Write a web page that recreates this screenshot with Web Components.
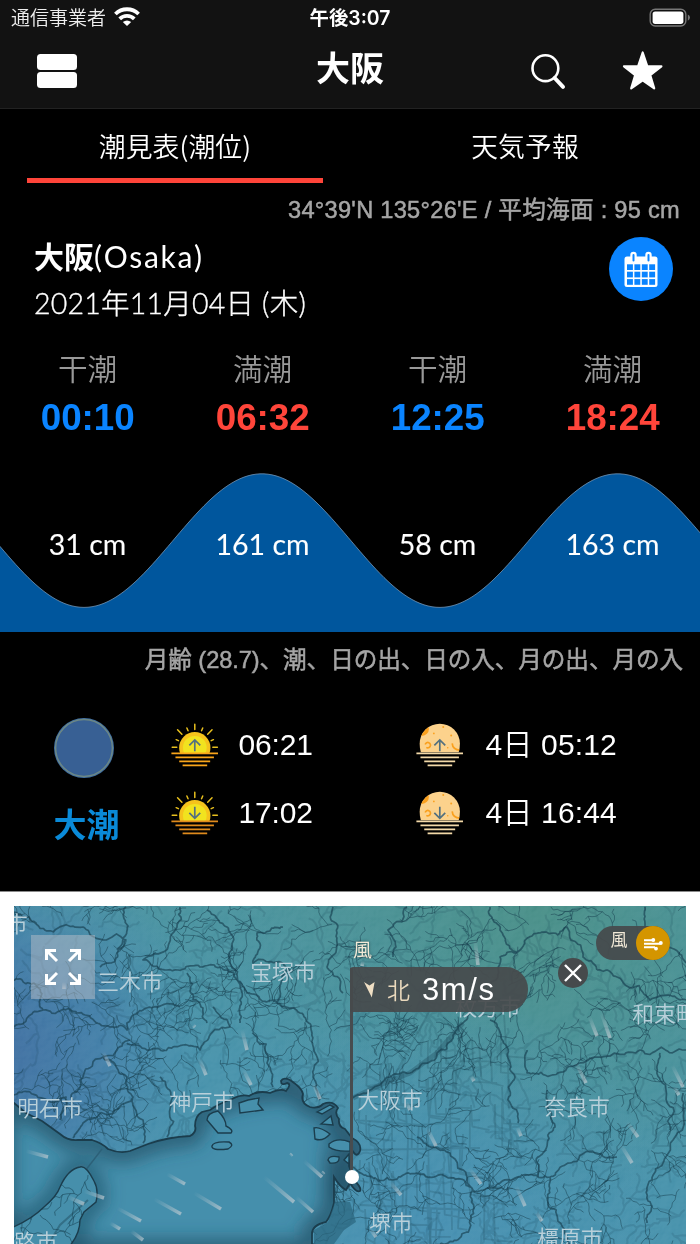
<!DOCTYPE html>
<html lang="ja">
<head>
<meta charset="utf-8">
<title>大阪</title>
<style>
   html, body {
      margin: 0;
      width: 700px;
      height: 1244px;
      overflow: hidden;
      background: #000;
   }

   body {
      font-family: "Liberation Sans", "Noto Sans CJK JP", sans-serif;
      color: #fff;
   }
</style>
</head>
<body>

<tide-app>
   <status-bar slot="top" carrier="通信事業者">午後3:07</status-bar>
   <nav-bar slot="top">大阪</nav-bar>

   <tab-row>
      <tab-item active>潮見表(潮位)</tab-item>
      <tab-item>天気予報</tab-item>
   </tab-row>

   <section-note style="--right: 20px; --size: 23.6px; --track: 0.28px; --h: 54px">34°39'N 135°26'E / 平均海面 : 95 cm</section-note>

   <place-header>
      <b slot="name">大阪</b><span slot="name">(Osaka)</span>
      <span slot="date">2021年11月04日 (木)</span>
   </place-header>

   <tide-times>
      <tide-time time="00:10">干潮</tide-time>
      <tide-time time="06:32" high>満潮</tide-time>
      <tide-time time="12:25">干潮</tide-time>
      <tide-time time="18:24" high>満潮</tide-time>
   </tide-times>

   <tide-wave>
      <span>31 cm</span>
      <span>161 cm</span>
      <span>58 cm</span>
      <span>163 cm</span>
   </tide-wave>

   <section-note style="--right: 17px; --size: 23.6px; --track: -0.07px; --h: 56px">月齢 (28.7)、潮、日の出、日の入、月の出、月の入</section-note>

   <sky-panel>
      <moon-phase slot="moon">大潮</moon-phase>
      <rise-set slot="sun" kind="sun" dir="up">06:21</rise-set>
      <rise-set slot="sun" kind="sun" dir="down">17:02</rise-set>
      <rise-set slot="moons" kind="moon" dir="up">4日 05:12</rise-set>
      <rise-set slot="moons" kind="moon" dir="down">4日 16:44</rise-set>
   </sky-panel>

   <wind-map slot="map">
      <map-label x="-5" y="923">加東市</map-label>
      <map-label x="130" y="981">三木市</map-label>
      <map-label x="283" y="971">宝塚市</map-label>
      <map-label x="50" y="1107">明石市</map-label>
      <map-label x="202" y="1101">神戸市</map-label>
      <map-label x="390" y="1099">大阪市</map-label>
      <map-label x="577" y="1106">奈良市</map-label>
      <map-label x="488" y="1006">枚方市</map-label>
      <map-label x="665" y="1013">和束町</map-label>
      <map-label x="391" y="1222">堺市</map-label>
      <map-label x="570" y="1237">橿原市</map-label>
      <map-label x="25" y="1241">淡路市</map-label>
   </wind-map>
</tide-app>

<script>
// Attach an open shadow root and fill it
function shadow(el, html) {
   const root = el.attachShadow({ mode: "open" });

   root.innerHTML = html;

   return root;
}

// Page frame: bars, dark content, map below
class TideApp extends HTMLElement {
   connectedCallback() {
      shadow(this, `
         <style>
            :host {
               display: flex;
               flex-direction: column;
               width: 700px;
               height: 1244px;
               overflow: hidden;
               background: #fff;
            }

            header { background: #121212; border-bottom: 1px solid #222; }
            main   { background: #000; border-bottom: 1px solid #8a8a8a; height: 782px; }
            footer { padding: 14px 14px 0; }
         </style>
         <header><slot name="top"></slot></header>
         <main><slot></slot></main>
         <footer><slot name="map"></slot></footer>
      `);
   }
}

class StatusBar extends HTMLElement {
   connectedCallback() {
      shadow(this, `
         <style>
            :host {
               display: grid;
               grid-template-columns: 1fr auto 1fr;
               align-items: center;
               height: 36px;
               padding: 0 8px 0 11px;
               box-sizing: border-box;
               font: 350 19px/34px "Noto Sans CJK JP", sans-serif;
            }

            .left { display: flex; align-items: center; gap: 8px; color: #eee; }
            .time { font: 600 19.4px/36px Inter, "Noto Sans CJK JP", sans-serif; margin-right: 3px; }
            .right { justify-self: end; display: flex; }
            .left span { margin-top: -2px; }
            .left svg { margin-top: -3px; }
         </style>
         <div class="left">
            <span>${this.getAttribute("carrier")}</span>
            <svg width="26" height="19" viewBox="0 0 26 19" fill="none" stroke="#fff" stroke-width="3.8">
               <path d="M1.4 7A16.6 16.6 0 0 1 24.6 7"/>
               <path d="M5.7 11.8A10.4 10.4 0 0 1 20.3 11.8"/>
               <path d="M13 19L8.8 15.1Q13 12 17.2 15.1Z" fill="#fff" stroke="none"/>
            </svg>
         </div>
         <div class="time"><slot></slot></div>
         <div class="right">
            <svg width="43" height="20" viewBox="0 0 43 20">
               <rect x="1.2" y="1.2" width="35.6" height="16.8" rx="5" fill="none" stroke="#777" stroke-width="1.4"/>
               <rect x="3.6" y="3.5" width="30.8" height="12.4" rx="2.6" fill="#fff"/>
               <path d="M38.8 6.4Q41 7.4 41 9.4T38.8 12.8Z" fill="#777"/>
            </svg>
         </div>
      `);
   }
}

class NavBar extends HTMLElement {
   connectedCallback() {
      shadow(this, `
         <style>
            :host {
               display: grid;
               grid-template-columns: 1fr auto 1fr;
               height: 72px;
               padding: 0 36px 0 37px;
               box-sizing: border-box;
               font: 700 34px/62px "Noto Sans CJK JP", sans-serif;
            }

            .title { margin-right: 1px; }
            .cards { padding-top: 18px; display: flex; flex-direction: column; gap: 2px; }
            .cards i { width: 39.5px; height: 15.8px; border-radius: 3.5px; background: #fff; }
            .icons { justify-self: end; display: flex; gap: 54px; padding-top: 13px; }
         </style>
         <div class="cards"><i></i><i></i></div>
         <div class="title"><slot></slot></div>
         <div class="icons">
            <svg width="40" height="44" viewBox="0 0 40 44" fill="none" stroke="#fff" stroke-linecap="round">
               <circle cx="17.4" cy="19.2" r="12.9" stroke-width="2.6"/>
               <path d="M26.7 29L35 37.8" stroke-width="4"/>
            </svg>
            <svg width="42" height="44" viewBox="0 0 42 44">
               <path d="M20.7 3.5L25.3 17.3H39.4L28.2 26.1L32.2 39.4L20.7 31.4L9.2 39.4L13.2 26.1L2 17.3H16.1Z" fill="#fff" stroke="#fff" stroke-width="2.2" stroke-linejoin="round"/>
            </svg>
         </div>
      `);
   }
}

class TabRow extends HTMLElement {
   connectedCallback() {
      shadow(this, `
         <style>
            :host {
               display: grid;
               grid-template-columns: 1fr 1fr;
               gap: 54px;
               padding: 0 27px;
               height: 74px;
            }
         </style>
         <slot></slot>
      `);
   }
}

class TabItem extends HTMLElement {
   connectedCallback() {
      shadow(this, `
         <style>
            :host {
               display: block;
               box-sizing: border-box;
               height: 74px;
               text-align: center;
               font: 350 26.8px/74px "Noto Sans CJK JP", sans-serif;
               letter-spacing: 0.1px;
               border-bottom: 5px solid transparent;
            }

            :host([active]) { border-color: #ff453a; }
         </style>
         <slot></slot>
      `);
   }
}

// Grey right-aligned caption
class SectionNote extends HTMLElement {
   connectedCallback() {
      shadow(this, `
         <style>
            :host {
               display: block;
               text-align: right;
               white-space: nowrap;
               height: var(--h);
               padding-right: var(--right);
               font-size: var(--size);
               font-weight: 400;
               line-height: var(--h);
               letter-spacing: var(--track);
               color: #a5a5a5;
               -webkit-text-stroke: 0.5px #a5a5a5;
            }
         </style>
         <slot></slot>
      `);
   }
}

class PlaceHeader extends HTMLElement {
   connectedCallback() {
      shadow(this, `
         <style>
            :host {
               display: flex;
               justify-content: space-between;
               height: 89px;
               padding: 0 27px 0 34px;
               font-family: Lato, "Noto Sans CJK JP", sans-serif;
            }

            .name { font-size: 30px; line-height: 39px; height: 42px; }
            .name ::slotted(span) { letter-spacing: 1.7px; }

            .date {
               font-size: 28.5px;
               line-height: 48px;
               font-weight: 300;
               letter-spacing: 0.22px;
               -webkit-text-stroke: 0.35px #fff;
            }

            svg { display: block; }
         </style>
         <div>
            <div class="name"><slot name="name"></slot></div>
            <div class="date"><slot name="date"></slot></div>
         </div>
         <svg width="64" height="64" viewBox="0 0 64 64">
            <circle cx="32" cy="32" r="32" fill="#0a84ff"/>
            <rect x="15.5" y="19.5" width="33" height="30.5" rx="2.5" fill="#fff"/>
            <g fill="#0a84ff">
               ${[27.3, 34.7, 42.1].map(y => [18, 25.4, 32.8, 40.2].map(x =>
                  `<rect x="${x}" y="${y}" width="5.9" height="5.7"/>`).join("")).join("")}
            </g>
            <rect x="22.4" y="15.9" width="4.2" height="9.6" rx="2.1" fill="#0a84ff" stroke="#fff" stroke-width="2.2"/>
            <rect x="37.4" y="15.9" width="4.2" height="9.6" rx="2.1" fill="#0a84ff" stroke="#fff" stroke-width="2.2"/>
         </svg>
      `);
   }
}

class TideTimes extends HTMLElement {
   connectedCallback() {
      shadow(this, `
         <style>
            :host {
               display: grid;
               grid-template-columns: repeat(4, 1fr);
               height: 96px;
               padding-top: 22px;
            }
         </style>
         <slot></slot>
      `);
   }
}

class TideTime extends HTMLElement {
   connectedCallback() {
      shadow(this, `
         <style>
            :host { display: block; text-align: center; color: #0a84ff; }
            :host([high]) { color: #ff453a; }

            .label { height: 44px; font: 350 29.6px/40px "Noto Sans CJK JP", sans-serif; color: #999; }
            .time  { font-size: 36.8px; line-height: 52px; font-weight: 700; padding-left: 0.5px; }
         </style>
         <div class="label"><slot></slot></div>
         <div class="time">${this.getAttribute("time")}</div>
      `);
   }
}

// Sine wave with the heights laid over it
class TideWave extends HTMLElement {
   connectedCallback() {
      let line = "";

      for (let x = -4; x <= 704; x += 4)
         line += `${line ? "L" : "M"}${x} ${(96.6 + 66.8 * Math.cos(2 * Math.PI * (x - 84) / 355.8)).toFixed(2)}`;

      shadow(this, `
         <style>
            :host { display: grid; height: 188px; }
            svg, .heights { grid-area: 1 / 1; }
            svg { display: block; }

            .heights {
               display: grid;
               grid-template-columns: repeat(4, 1fr);
               padding-top: 80px;
               text-align: center;
               font: 400 28.5px/40px Lato, sans-serif;
               letter-spacing: 0;
               -webkit-text-stroke: 0.1px #fff;
               z-index: 1;
            }
         </style>
         <svg width="700" height="188" viewBox="0 0 700 188">
            <path d="${line}V188H-4Z" fill="#00569d"/>
            <path d="${line}" fill="none" stroke="#7296b6" stroke-width="0.8"/>
         </svg>
         <div class="heights"><slot></slot></div>
      `);
   }
}

class SkyPanel extends HTMLElement {
   connectedCallback() {
      shadow(this, `
         <style>
            :host {
               display: grid;
               grid-template-columns: 137px 245px 1fr;
               padding: 24px 0 0 34px;
               height: 179px;
            }

            .col { display: flex; flex-direction: column; }
         </style>
         <div class="col"><slot name="moon"></slot></div>
         <div class="col"><slot name="sun"></slot></div>
         <div class="col"><slot name="moons"></slot></div>
      `);
   }
}

class MoonPhase extends HTMLElement {
   connectedCallback() {
      shadow(this, `
         <style>
            :host {
               display: flex;
               flex-direction: column;
               align-items: center;
               width: 105px;
               padding-top: 6px;
               font: 700 33px/52px "Noto Sans CJK JP", sans-serif;
               color: #0a8ad8;
            }

            svg { margin: 0 5px 19px 0; }
         </style>
         <svg width="60" height="60" viewBox="0 0 60 60">
            <circle cx="30" cy="30" r="30" fill="#3d6da3"/>
            <circle cx="30" cy="30" r="28.4" fill="#386094" stroke="#6c8784" stroke-width="1.5"/>
         </svg>
         <slot></slot>
      `);
   }
}

// Sun or moon on the horizon with its time
class RiseSet extends HTMLElement {
   connectedCallback() {
      const up = this.getAttribute("dir") == "up";
      const sun = this.getAttribute("kind") == "sun";
      const arrow = up ? "M24 28.5V17M18.5 22.5L24 17L29.5 22.5" : "M24 16V27.5M18.5 22L24 27.5L29.5 22";
      const water = sun ? (up ? "#f9a51a" : "#df8a1c") : "#f3d9a8";

      const disc = sun ? `
         <clipPath id="c"><rect width="48" height="30.5"/></clipPath>
         <g clip-path="url(#c)">
            <circle cx="24" cy="25" r="15.8" fill="#f5c31c"/>
            <circle cx="24" cy="25" r="12" fill="#f1e31f"/>
         </g>
         <path stroke="#e8c01e" stroke-width="1.5" stroke-linecap="round" d="M24 1.2V6.5M16 5L17.2 7.8M32 5L30.8 7.8M6.6 6.8L11 11.4M41.4 6.8L37 11.4M5.2 16.8L7.5 17.8M42.8 16.8L40.5 17.8M1.2 24.5H5.8M46.8 24.5H42.2"/>` : `
         <clipPath id="c"><path d="M3.7 21a20.3 20.3 0 0 1 40.6 0q0 5-1.2 8.5H4.9Q3.7 26 3.7 21Z"/></clipPath>
         <g clip-path="url(#c)" fill="none" stroke="#faa01e" stroke-width="1.7">
            <rect width="48" height="31" fill="#fcd28c" stroke="none"/>
            <circle cx="6" cy="6" r="7" fill="#faa01e" stroke="none"/>
            <path d="M9.3 21.6A2.7 2.7 0 1 1 10.4 24.6"/>
            <path d="M36.5 20.5Q37 27 45 27.5"/>
         </g>
         <g fill="#faa01e"><circle cx="27.5" cy="4" r="1"/><circle cx="18" cy="10.5" r=".9"/><circle cx="35.5" cy="12.7" r="1"/><circle cx="32" cy="25" r=".8"/></g>`;

      shadow(this, `
         <style>
            :host {
               display: flex;
               align-items: center;
               gap: ${sun ? 20 : 22}px;
               height: 68px;
               font-size: 30px;
               font-weight: 350;
               line-height: 66px;
               letter-spacing: ${sun ? -0.2 : 0.15}px;
               white-space: nowrap;
            }

            span { margin-top: -2px; }
         </style>
         <svg width="47.6" height="45.6" viewBox="0 0 48 46" fill="none">
            ${disc}
            <path d="${arrow}" stroke="#53707f" stroke-width="1.7"/>
            <path stroke="${water}" stroke-width="1.7" d="M.4 30.6H47.4M4.5 34.6H43.3M8.3 38.7H39.5M11.7 42.8H36.5"/>
         </svg>
         <span><slot></slot></span>
      `);
   }
}

// Land and water of the wind map, in page coordinates
const COAST = "M14 1103L26 1113L42 1121L60 1134Q68 1141 78 1140L92 1140Q102 1143 108 1149Q120 1154 130 1151L148 1144Q168 1137 190 1136Q197 1132 195 1126Q195 1116 202 1112L210 1110Q220 1103 232 1099Q242 1094 249 1096Q258 1090 270 1093Q281 1088 286 1091Q292 1084 287 1083Q281 1086 281 1081Q283 1077 290 1080Q302 1088 303 1094Q300 1103 310 1107Q318 1109 323 1104Q333 1100 338 1108Q334 1113 339 1119Q338 1127 345 1129L352 1138Q362 1143 360 1151Q357 1159 352 1150L349 1166L354 1180Q362 1188 360 1191Q356 1193 350 1183L346 1190Q340 1187 334 1177L334 1203Q331 1216 326 1222Q312 1225 312 1234L312 1250H4V1103Z";

const ISLANDS = [
   "M4 1231Q30 1221 44 1207Q57 1196 60 1187Q68 1169 80 1167Q86 1165 94 1181Q99 1190 96 1202L84 1212L80 1220Q80 1236 66 1250H4Z",
   "M207 1120Q207 1113 218 1111Q226 1119 226 1126Q234 1130 231 1133L218 1133Z",
   "M212 1146Q213 1141 229 1142Q235 1145 228 1149Q211 1151 212 1146Z",
   "M239 1103L248 1100L259 1098L258 1104L263 1110L240 1113Z",
   "M314 1128Q319 1126 330 1134Q323 1142 315 1139Z",
   "M321 1124L331 1116L333 1125Z",
   "M329 1144Q337 1137 350 1142V1151Q336 1152 329 1147Z",
   "M328 1160Q329 1155 339 1157Q340 1164 330 1163Z",
   "M317 1112L330 1105L334 1107L322 1114Z",
   "M344 1160L349 1154V1164Z",
];

const RIVERS = [
   [14, 912, 36, 923, 83, 927, 126, 940, 110, 963, 100, 967],
   [126, 907, 128, 926, 117, 950],
   [180, 907, 177, 927, 143, 960, 167, 970, 200, 967, 227, 970, 247, 993, 277, 1003, 300, 1013, 312, 1033, 313, 1077, 320, 1100],
   [333, 907, 337, 933, 327, 967, 343, 993],
   [277, 1003, 290, 970, 253, 963, 257, 933, 283, 927],
   [14, 1027, 43, 1010, 34, 983, 14, 980],
   [43, 1010, 77, 1013, 110, 1027, 127, 1030, 143, 1010, 180, 1007],
   [127, 1043, 150, 1050, 173, 1047, 200, 1050, 230, 1027, 213, 1007],
   [72, 1103, 80, 1080, 103, 1057, 130, 1040],
   [103, 1057, 127, 1077, 133, 1097, 83, 1123, 73, 1138],
   [133, 1097, 143, 1120, 143, 1143],
   [207, 910, 227, 927, 230, 963, 240, 1000, 240, 1023],
   [253, 1033, 267, 1063, 273, 1087],
   [160, 1077, 173, 1097, 167, 1137],
   [187, 973, 193, 1000, 207, 1023],
   [597, 970, 583, 957, 567, 927, 540, 933, 517, 953, 500, 957, 498, 977, 463, 1023, 437, 1053, 410, 1073, 380, 1085, 353, 1098],
   [490, 1020, 507, 1047, 515, 1077, 518, 1123],
   [527, 1050, 527, 1073, 563, 1072, 600, 1057, 640, 1050, 686, 1050],
   [547, 1090, 555, 1127, 543, 1153, 537, 1177],
   [353, 1167, 393, 1180, 417, 1173, 450, 1178, 477, 1192, 500, 1183, 523, 1175, 550, 1177, 570, 1163, 617, 1157],
   [417, 1137, 450, 1153, 473, 1190],
   [683, 1093, 673, 1140, 647, 1190, 647, 1223],
   [597, 970, 617, 977, 650, 1000, 686, 1000],
   [645, 907, 645, 923, 663, 947, 686, 963],
   [407, 907, 388, 930, 393, 957],
   [490, 907, 500, 930, 517, 953],
   [660, 1053, 660, 1080, 670, 1130],
   [550, 1177, 548, 1205, 570, 1244],
   [60, 1120, 66, 1097, 30, 1092, 14, 1095],
   [473, 1190, 470, 1220, 440, 1244],
];

// head x, head y, tail dx, tail dy
const GUSTS = [
   [110, 1066, -7, -14], [247, 1050, -5, -20], [206, 1075, -7, -17], [251, 1085, -8, -16], [320, 1099, -7, -16],
   [48, 1157, -22, -6], [185, 1184, -18, -10], [104, 1198, -20, -7], [84, 1204, -16, -7], [181, 1214, -27, -15],
   [141, 1221, -24, -13], [120, 1229, -10, -6], [143, 1240, -12, -9], [221, 1209, -27, -16], [294, 1202, -30, -25],
   [322, 1177, -18, -16], [313, 1212, -17, -15], [478, 965, -3, -25], [597, 1036, -8, -20], [610, 1038, -9, -26],
   [586, 1083, -10, -20], [683, 1087, -11, -22], [679, 1095, -5, -8], [436, 1146, -9, -18], [410, 1110, -4, -8],
   [481, 1184, -12, -16], [401, 1195, -11, -13], [525, 1206, -9, -20], [542, 1221, -6, -9], [632, 1163, -11, -18],
   [638, 1137, -11, -15], [521, 1136, -4, -9], [474, 1081, -3, -5], [376, 1237, -6, -8], [195, 1027, -2, -2],
   [292, 1154, -2, 2], [324, 1172, -2, 2], [64, 989, 0, -7], [362, 966, 1, -5],
];

// Small seeded generator, so the streams are the same on each load
let seed = 77;
const rnd = () => (seed = (seed * 16807) % 2147483647) / 2147483647;

// Break a straight segment into a winding one
function wind(x1, y1, x2, y2, n) {
   const len = Math.hypot(x2 - x1, y2 - y1);

   if (n == 0 || len < 3)
      return `L${x2.toFixed(1)} ${y2.toFixed(1)}`;

   const mx = (x1 + x2) / 2 + (rnd() - 0.5) * len * 0.38;
   const my = (y1 + y2) / 2 + (rnd() - 0.5) * len * 0.38;

   return wind(x1, y1, mx, my, n - 1) + wind(mx, my, x2, y2, n - 1);
}

// Random walk with side branches
function stream(x, y, angle, steps, depth) {
   let d = `M${x.toFixed(1)} ${y.toFixed(1)}`;
   let more = "";
   let bend = (rnd() - 0.5) * 0.2;

   for (let i = 0; i < steps; i++) {
      const a = angle + (rnd() - 0.5) * 1.3;

      angle += bend;
      x += Math.cos(a) * 4;
      y += Math.sin(a) * 4;
      d += `L${x.toFixed(1)} ${y.toFixed(1)}`;

      if (depth > 0 && rnd() < 0.2)
         more += stream(x, y, angle + (rnd() < 0.5 ? -1 : 1) * (0.6 + rnd() * 0.5), 2 + steps * 0.45 * rnd(), depth - 1);
   }

   return d + more;
}

class WindMap extends HTMLElement {
   connectedCallback() {
      const rivers = RIVERS.map(p => {
         let d = `M${p[0]} ${p[1]}`;

         for (let i = 2; i < p.length; i += 2)
            d += wind(p[i - 2], p[i - 1], p[i], p[i + 1], 4);

         return d;
      }).join("");

      let streams = "";
      let faint = "";

      for (let y = 908; y < 1250; y += 36)
         for (let x = 18; x < 690; x += 36) {
            streams += stream(x + rnd() * 30, y + rnd() * 30, rnd() * 6.28, 9 + rnd() * 9, 2);
            faint += stream(x + rnd() * 30, y + rnd() * 30, rnd() * 6.28, 14, 1);
         }

      // City streets
      let roads = "";

      for (let i = 0; i < 60; i++) {
         const x = 356 + rnd() * 155;
         const y = 1015 + rnd() * 215;

         roads += `M${x | 0} ${y | 0}l${rnd() * 5 - 2} ${20 + rnd() * 32}l${8 + rnd() * 26} ${rnd() * 5}`;
      }

      roads += "M374 1244L392 1150L392 1080L430 1010M405 1244L408 1140L402 1060M430 1244L428 1130L436 1050M452 1230L450 1100L470 1040M356 1120L420 1125L480 1120M356 1150L480 1148M360 1205L470 1210";

      const gusts = GUSTS.map(([x, y, dx, dy], i) => `
         <linearGradient id="g${i}" gradientUnits="userSpaceOnUse" x1="${x + dx}" y1="${y + dy}" x2="${x}" y2="${y}">
            <stop offset="0" stop-color="#b9c6cd" stop-opacity="0"/><stop offset="1" stop-color="#c3ccd2" stop-opacity=".68"/>
         </linearGradient>
         <path d="M${x + dx} ${y + dy}L${x} ${y}" stroke="url(#g${i})" stroke-width="3.6"/>`).join("");

      shadow(this, `
         <style>
            :host {
               display: block;
               position: relative;
               width: 672px;
               height: 338px;
               overflow: hidden;
               background: #458fac;
            }

            svg { display: block; }

            .full, .hud, .close, .toggle, .name, .pin { position: absolute; }

            .full {
               left: 17px;
               top: 29px;
               width: 64px;
               height: 64px;
               background: #b7bec880;
            }

            .pin { left: 336px; top: 62px; width: 3px; height: 204px; background: #474c4f; }
            .pin::after {
               content: "";
               position: absolute;
               left: -5px;
               top: 202px;
               width: 14px;
               height: 14px;
               border-radius: 50%;
               background: #fff;
            }

            .name { left: 339px; top: 29px; font: 400 19px/28px "Noto Sans CJK JP", sans-serif; color: #f2ead8; text-shadow: 0 0 3px #0008; }

            .hud {
               left: 336px;
               top: 61px;
               display: flex;
               align-items: center;
               width: 178px;
               height: 45px;
               box-sizing: border-box;
               padding-left: 14px;
               border-radius: 3px 22px 22px 0;
               background: #464a4ceb;
               font-size: 31px;
               line-height: 45px;
            }

            .hud b { margin: 0 12px 0 11px; font: 350 23px/45px "Noto Sans CJK JP", sans-serif; color: #ead9bd; }
            .hud span { letter-spacing: 1.6px; }

            .close { left: 544px; top: 52px; }

            .toggle {
               left: 582px;
               top: 20px;
               display: flex;
               justify-content: space-between;
               width: 73.5px;
               height: 34px;
               border-radius: 17px;
               background: #464a4cf0;
               font: 400 17px/26px "Noto Sans CJK JP", sans-serif;
               color: #f2ead8;
            }

            .toggle span { padding-left: 14.5px; }
         </style>

         <svg width="672" height="338" viewBox="14 906 672 338">
            <defs>
               <linearGradient id="base" x1="0" y1="1" x2=".5" y2="0">
                  <stop offset="0" stop-color="#4590ae"/>
                  <stop offset=".55" stop-color="#4590a9"/>
                  <stop offset="1" stop-color="#489199"/>
               </linearGradient>
               <radialGradient id="west" gradientUnits="userSpaceOnUse" cx="0" cy="1050" r="210">
                  <stop offset="0" stop-color="#3e6c9f"/>
                  <stop offset=".5" stop-color="#4079a6" stop-opacity=".8"/>
                  <stop offset="1" stop-color="#4389ab" stop-opacity="0"/>
               </radialGradient>
               <radialGradient id="east" gradientUnits="userSpaceOnUse" cx="540" cy="900" r="310">
                  <stop offset="0" stop-color="#478d85"/>
                  <stop offset="1" stop-color="#478d90" stop-opacity="0"/>
               </radialGradient>
               <radialGradient id="south" gradientUnits="userSpaceOnUse" cx="430" cy="1230" r="240">
                  <stop offset="0" stop-color="#448db0"/>
                  <stop offset="1" stop-color="#448dac" stop-opacity="0"/>
               </radialGradient>
               <filter id="blur" x="-10%" y="-10%" width="120%" height="120%"><feGaussianBlur stdDeviation="9"/></filter>
               <filter id="relief" x="0" y="0" width="100%" height="100%">
                  <feTurbulence type="fractalNoise" baseFrequency=".09" numOctaves="3" seed="4"/>
                  <feDiffuseLighting surfaceScale="3" lighting-color="#fff"><feDistantLight azimuth="225" elevation="50"/></feDiffuseLighting>
               </filter>
               <clipPath id="sea"><path d="${COAST}"/></clipPath>
               <clipPath id="isles"><path d="${ISLANDS.join("")}"/></clipPath>
            </defs>

            <rect x="14" y="906" width="672" height="338" fill="url(#base)"/>
            <rect x="14" y="906" width="672" height="338" fill="url(#west)"/>
            <rect x="14" y="906" width="672" height="338" fill="url(#east)"/>
            <rect x="14" y="906" width="672" height="338" fill="url(#south)"/>
            <rect x="14" y="906" width="672" height="338" filter="url(#relief)" opacity=".14" style="mix-blend-mode: soft-light"/>

            <g fill="none" stroke="#173f50" stroke-linejoin="round">
               <path d="${faint}" stroke-width="2" stroke-opacity=".15"/>
               <path d="${roads}" stroke-width="1.8" stroke-opacity=".2"/>
               <path d="${streams}" stroke-width="1" stroke-opacity=".5"/>
               <path d="${rivers}" stroke-width="1.7" stroke-opacity=".65"/>
               <path d="M463 1023L437 1053L410 1073L380 1085L353 1098" stroke-width="5" stroke-opacity=".3"/>
            </g>

            <g clip-path="url(#sea)">
               <path d="${COAST}" fill="#458fac"/>
               <g fill="none" stroke="#1f4c62" filter="url(#blur)">
                  <path d="${COAST}" stroke-width="20" stroke-opacity=".75"/>
                  <path d="${ISLANDS[0]}" stroke-width="18" stroke-opacity=".65"/>
                  <path d="M325 1110L345 1160L330 1200" stroke-width="18" stroke-opacity=".5"/>
               </g>
               <path d="M102 1149L82 1175" stroke="#2c6078" stroke-width="1.4"/>
               <path d="${ISLANDS.join("")}" fill="#468fab" stroke="#1b3d4d" stroke-width="1.4"/>
               <g clip-path="url(#isles)" fill="none" stroke="#173f50">
                  <path d="${stream(14, 1240, -0.7, 22, 2)}${stream(88, 1175, 1.9, 14, 2)}${stream(40, 1215, 0.5, 12, 2)}${stream(20, 1228, 0.2, 14, 2)}" stroke-width=".9" stroke-opacity=".6"/>
                  <path d="M88 1200L60 1225L45 1250" stroke-width="2" stroke-opacity=".4"/>
               </g>
            </g>
            <path d="${COAST}" fill="none" stroke="#1b3d4d" stroke-width="1.8"/>
            <path d="M335 1202H350L356 1222L344 1230L334 1244H314V1230L328 1222Z" fill="#2b667f" opacity=".7"/>
            ${gusts}
         </svg>

         <slot></slot>

         <svg class="full" viewBox="0 0 64 64" fill="none" stroke="#fff" stroke-width="3">
            <path d="M15.5 25V15.5H25M16 16L26 26M39 15.5H48.5V25M48 16L38 26M15.5 39V48.5H25M16 48L26 38M39 48.5H48.5V39M48 48L38 38"/>
         </svg>
         <div class="name">風</div>
         <div class="pin"></div>
         <div class="hud">
            <svg width="12" height="16" viewBox="0 0 12 16"><path d="M0 0L5.5 3.6L10.6 0L7.8 15.4Z" fill="#efdfc4"/></svg>
            <b>北</b>
            <span>3m/s</span>
         </div>
         <svg class="close" width="30" height="30" viewBox="0 0 30 30">
            <circle cx="15" cy="15" r="15" fill="#464a4c"/>
            <path d="M7 7L23 23M23 7L7 23" stroke="#fff" stroke-width="2.4"/>
         </svg>
         <div class="toggle">
            <span>風</span>
            <svg width="34" height="34" viewBox="0 0 34 34">
               <circle cx="17" cy="17" r="17" fill="#d49500"/>
               <g stroke="#fff" stroke-width="1.9" fill="#fff">
                  <path d="M8 14.3H17M8 17.8H24M8 21.3H19" fill="none"/>
                  <circle cx="17.3" cy="14" r="1"/><circle cx="24.8" cy="17" r="1"/><circle cx="20" cy="22.6" r="1"/>
               </g>
            </svg>
         </div>
      `);
   }
}

// City name, centred on page coordinates
class MapLabel extends HTMLElement {
   connectedCallback() {
      shadow(this, `
         <style>
            :host {
               position: absolute;
               left: ${this.getAttribute("x") - 14}px;
               top: ${this.getAttribute("y") - 906}px;
               transform: translate(-50%, -50%);
               white-space: nowrap;
               font: 350 21.8px/30px "Noto Sans CJK JP", sans-serif;
               color: #b9d0da;
            }
         </style>
         <slot></slot>
      `);
   }
}

customElements.define("tide-app", TideApp);
customElements.define("status-bar", StatusBar);
customElements.define("nav-bar", NavBar);
customElements.define("tab-row", TabRow);
customElements.define("tab-item", TabItem);
customElements.define("section-note", SectionNote);
customElements.define("place-header", PlaceHeader);
customElements.define("tide-times", TideTimes);
customElements.define("tide-time", TideTime);
customElements.define("tide-wave", TideWave);
customElements.define("sky-panel", SkyPanel);
customElements.define("moon-phase", MoonPhase);
customElements.define("rise-set", RiseSet);
customElements.define("wind-map", WindMap);
customElements.define("map-label", MapLabel);
</script>
</body>
</html>
